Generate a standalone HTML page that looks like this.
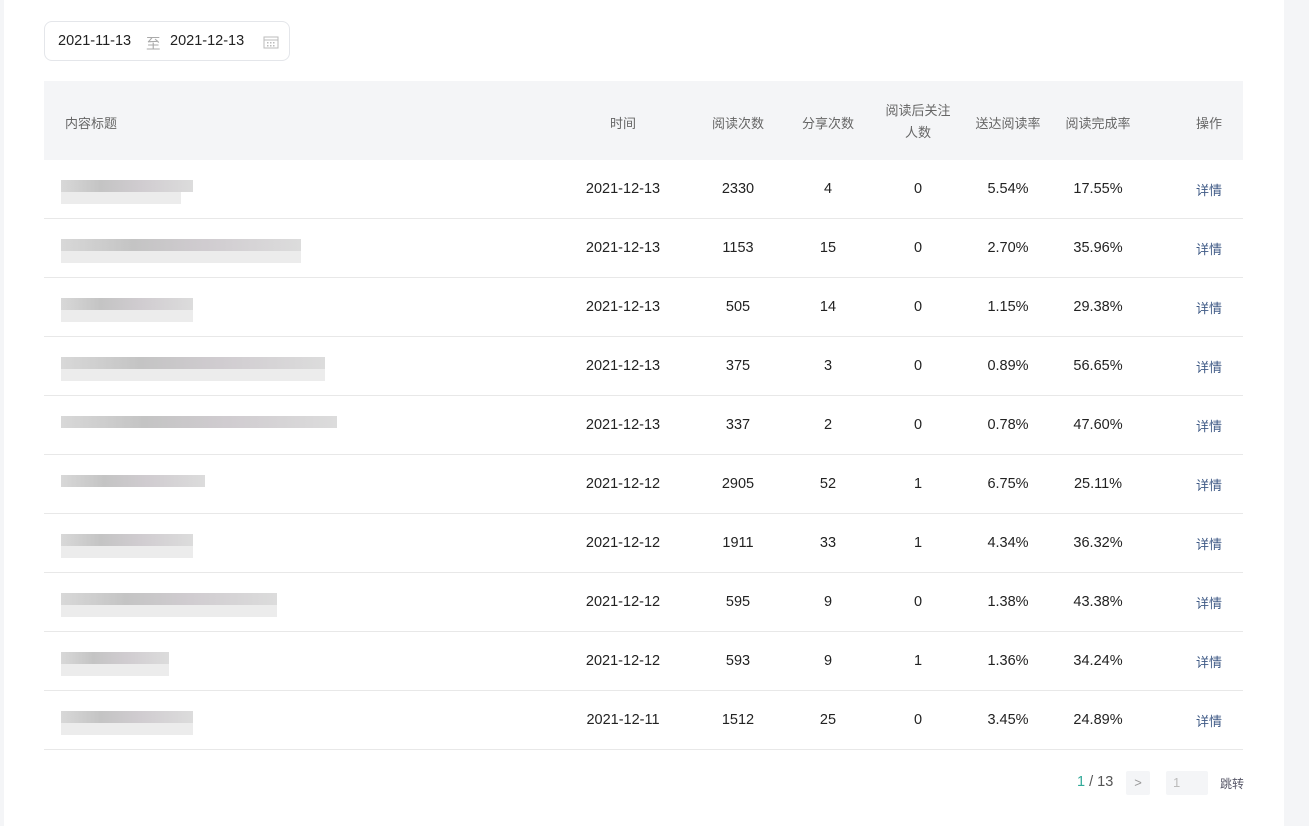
<!DOCTYPE html><html><head><meta charset="utf-8"><style>
body{margin:0;width:1309px;height:826px;background:#fff;font-family:"Liberation Sans","Noto Sans CJK SC",sans-serif;position:relative;overflow:hidden}
.l{position:absolute;left:0;top:0;width:4px;height:826px;background:#f4f5f7}
.r{position:absolute;left:1284px;top:0;width:25px;height:826px;background:#f4f5f7}
.dp{position:absolute;left:44px;top:21px;width:246px;height:40px;border:1px solid #e4e6ea;border-radius:8px;box-sizing:border-box;font-size:14.5px;color:#222}
.dp span{position:absolute;top:11px}
.hd{position:absolute;left:44px;top:81px;width:1199px;height:79px;background:#f4f5f7;font-size:13px;color:#666}
.c{position:absolute;text-align:center;transform:translateX(-50%);white-space:nowrap}
.row{position:absolute;left:44px;width:1199px;height:59px;border-bottom:1px solid #e8e8e8;box-sizing:border-box;font-size:14.5px;color:#222}
.row .c{top:21px}
.b1,.b2{position:absolute;left:17px;height:12px}
.b1{top:20px;background:linear-gradient(90deg,#d8d8d8,#c4c4c4 30%,#d0ccd0 60%,#dcdcdc)}
.b2{top:32px;background:#ececec}
.d{color:#3f5a86}
</style></head><body>
<div class="l"></div><div class="r"></div>
<div class="dp"><span style="left:13px">2021-11-13</span><span style="left:101px;color:#aaa">至</span><span style="left:125px">2021-12-13</span>
<svg style="position:absolute;left:218px;top:13px" width="16" height="14" viewBox="0 0 16 14"><rect x="1" y="2" width="14" height="11" fill="none" stroke="#bbb"/><line x1="1" y1="5" x2="15" y2="5" stroke="#bbb"/><g fill="#bbb"><rect x="4" y="7" width="1.5" height="1.5"/><rect x="7" y="7" width="1.5" height="1.5"/><rect x="10" y="7" width="1.5" height="1.5"/><rect x="4" y="10" width="1.5" height="1.5"/><rect x="7" y="10" width="1.5" height="1.5"/><rect x="10" y="10" width="1.5" height="1.5"/></g></svg></div>
<div class="hd">
<span style="position:absolute;left:21px;top:32px">内容标题</span>
<span class="c" style="left:579px;top:32px">时间</span>
<span class="c" style="left:694px;top:32px">阅读次数</span>
<span class="c" style="left:784px;top:32px">分享次数</span>
<span class="c" style="left:874px;top:19px;line-height:22px">阅读后关注<br>人数</span>
<span class="c" style="left:964px;top:32px">送达阅读率</span>
<span class="c" style="left:1054px;top:32px">阅读完成率</span>
<span class="c" style="left:1165px;top:32px">操作</span>
</div>
<div id="rows"></div>
<script>
var d=[["2021-12-13",2330,4,0,"5.54%","17.55%",132,120],["2021-12-13",1153,15,0,"2.70%","35.96%",240,240],["2021-12-13",505,14,0,"1.15%","29.38%",132,132],["2021-12-13",375,3,0,"0.89%","56.65%",264,264],["2021-12-13",337,2,0,"0.78%","47.60%",276,0],["2021-12-12",2905,52,1,"6.75%","25.11%",144,0],["2021-12-12",1911,33,1,"4.34%","36.32%",132,132],["2021-12-12",595,9,0,"1.38%","43.38%",216,216],["2021-12-12",593,9,1,"1.36%","34.24%",108,108],["2021-12-11",1512,25,0,"3.45%","24.89%",132,132]];
var h="";d.forEach(function(r,i){h+='<div class="row" style="top:'+(160+59*i)+'px"><div class="b1" style="width:'+r[6]+'px"></div>'+(r[7]?'<div class="b2" style="width:'+r[7]+'px"></div>':'')+'<span class="c" style="left:579px">'+r[0]+'</span><span class="c" style="left:694px">'+r[1]+'</span><span class="c" style="left:784px">'+r[2]+'</span><span class="c" style="left:874px">'+r[3]+'</span><span class="c" style="left:964px">'+r[4]+'</span><span class="c" style="left:1054px">'+r[5]+'</span><span class="c d" style="left:1165px;font-size:13px;top:20px">详情</span></div>';});
document.getElementById("rows").innerHTML=h;
</script>
<span style="position:absolute;left:1077px;top:774px;font-size:14.5px;color:#555"><span style="color:#3a9">1</span> / 13</span>
<div style="position:absolute;left:1126px;top:771px;width:24px;height:24px;background:#f4f5f7;border-radius:2px;color:#999;font-size:13px;text-align:center;line-height:24px">&gt;</div>
<div style="position:absolute;left:1166px;top:771px;width:42px;height:24px;background:#f4f5f7;border-radius:2px;color:#bbb;font-size:13px;line-height:24px;text-indent:7px">1</div>
<span style="position:absolute;left:1220px;top:775px;font-size:12px;color:#556">跳转</span>
</body></html>
